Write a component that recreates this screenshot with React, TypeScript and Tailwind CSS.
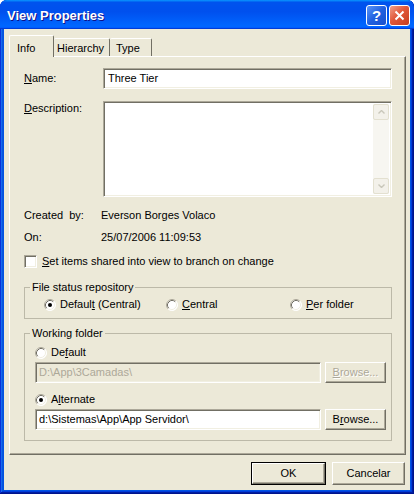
import React from "react";

const sunken =
  "border border-t-[#aca899] border-l-[#aca899] border-b-white border-r-white shadow-[inset_1px_1px_0_#716f64,inset_-1px_-1px_0_#f1efe2]";

function Radio({ checked }: { checked?: boolean }) {
  return (
    <svg width="12" height="12" viewBox="0 0 12 12" className="shrink-0">
      <circle cx="6" cy="6" r="5.5" fill="#fff" />
      <path d="M2.11 9.89 A5.5 5.5 0 0 1 9.89 2.11" stroke="#aca899" fill="none" />
      <path d="M9.89 2.11 A5.5 5.5 0 0 1 2.11 9.89" stroke="#fff" fill="none" />
      <path d="M2.82 9.18 A4.5 4.5 0 0 1 9.18 2.82" stroke="#716f64" fill="none" />
      <path d="M9.18 2.82 A4.5 4.5 0 0 1 2.82 9.18" stroke="#f1efe2" fill="none" />
      {checked && <circle cx="6" cy="6" r="2" fill="#000" />}
    </svg>
  );
}

function Button({
  children,
  def,
  disabled,
  className,
}: {
  children: React.ReactNode;
  def?: boolean;
  disabled?: boolean;
  className?: string;
}) {
  const face = (
    <div className="flex h-full w-full items-center justify-center border border-t-white border-l-white border-b-[#716f64] border-r-[#716f64] bg-[#ece9d8] shadow-[inset_-1px_-1px_0_#aca899]">
      <span
        className={
          disabled ? "text-[#aca899] [text-shadow:1px_1px_0_#fff]" : "text-black"
        }
      >
        {children}
      </span>
    </div>
  );
  if (def) {
    return <div className={`border border-black ${className ?? ""}`}>{face}</div>;
  }
  return <div className={className}>{face}</div>;
}

export default function App() {
  return (
    <div className="h-[494px] w-[418px] bg-white font-['Liberation_Sans',Arial,sans-serif] text-[11px] leading-[13px] text-black">
      <div className="flex h-[494px] w-[414px] flex-col rounded-t-[7px] bg-[#0054e3] shadow-[inset_-1px_-1px_#00138c,inset_1px_1px_#0831d9,inset_-2px_-2px_#001ea0,inset_2px_2px_#166aee,inset_-3px_-3px_#003bda,inset_3px_3px_#0855dd]">
        {/* title bar */}
        <div className="flex h-[29px] shrink-0 items-start rounded-t-[7px] bg-[linear-gradient(180deg,#0997ff,#0053ee_8%,#0050ee_40%,#06f_88%,#06f_93%,#005bff_95%,#003dd7_96%,#003dd7)] pl-[7px] pr-[4px]">
          <span className="mt-[8px] text-[13px] font-bold leading-[15px] text-white [text-shadow:1px_1px_0_#0f1089]">
            View Properties
          </span>
          <div className="ml-auto mt-[5px] flex gap-[2px]">
            <div className="flex h-[21px] w-[21px] items-center justify-center rounded-[3px] border border-white bg-[linear-gradient(135deg,#5a95f8,#2160e0_50%,#1a4fcc)]">
              <span className="text-[15px] font-bold leading-none text-white">?</span>
            </div>
            <div className="flex h-[21px] w-[21px] items-center justify-center rounded-[3px] border border-white bg-[linear-gradient(135deg,#f0a08a,#e1583a_45%,#c73d1e)]">
              <svg width="11" height="11" viewBox="0 0 11 11">
                <path d="M1.5 1.5 L9.5 9.5 M9.5 1.5 L1.5 9.5" stroke="#fff" strokeWidth="2" />
              </svg>
            </div>
          </div>
        </div>

        {/* body */}
        <div className="mx-[4px] flex h-[461px] flex-col bg-[#ece9d8] pl-[5px] pr-[4px]">
          {/* tabs */}
          <div className="mt-[6px] flex h-[21px] items-end">
            <div className="relative z-10 mb-[-1px] flex h-[22px] w-[45px] items-start rounded-t-[2px] border-l border-t border-r border-l-white border-t-white border-r-[#716f64] bg-[#ece9d8] pl-[7px] pt-[6px]">
              Info
            </div>
            <div className="flex h-[18px] w-[56px] items-start rounded-t-[2px] border-t border-r border-t-white border-r-[#716f64] pl-[3px] pt-[3px]">
              Hierarchy
            </div>
            <div className="flex h-[18px] w-[42px] items-start rounded-t-[2px] border-t border-r border-t-white border-r-[#716f64] pl-[6px] pt-[3px]">
              Type
            </div>
          </div>

          {/* panel */}
          <div className="flex h-[399px] w-[397px] flex-col border border-t-white border-l-white border-b-[#716f64] border-r-[#716f64] pl-[14px] shadow-[inset_-1px_-1px_0_#aca899]">
            <div className="mt-[11px] flex h-[21px] items-center">
              <span className="w-[79px]">
                <u>N</u>ame:
              </span>
              <div className={`flex h-[21px] w-[289px] items-center bg-white pl-[4px] ${sunken}`}>
                Three Tier
              </div>
            </div>

            <div className="mt-[12px] flex h-[96px]">
              <span className="w-[79px] pt-[1px]">
                <u>D</u>escription:
              </span>
              <div className={`flex h-[96px] w-[289px] justify-end bg-white p-[2px] ${sunken}`}>
                <div className="flex w-[16px] flex-col justify-between bg-[#f7f6f1]">
                  <div className="flex h-[16px] items-center justify-center rounded-[2px] border border-[#e3e0d0] bg-[#f3f1ea]">
                    <svg width="7" height="4" viewBox="0 0 7 4">
                      <path d="M0.5 3.5 L3.5 0.5 L6.5 3.5" stroke="#c9c7ba" fill="none" strokeWidth="1.4" />
                    </svg>
                  </div>
                  <div className="flex h-[16px] items-center justify-center rounded-[2px] border border-[#e3e0d0] bg-[#f3f1ea]">
                    <svg width="7" height="4" viewBox="0 0 7 4">
                      <path d="M0.5 0.5 L3.5 3.5 L6.5 0.5" stroke="#c9c7ba" fill="none" strokeWidth="1.4" />
                    </svg>
                  </div>
                </div>
              </div>
            </div>

            <div className="mt-[11px] flex leading-[14px]">
              <span className="w-[77px] whitespace-pre">Created  by:</span>
              <span>Everson Borges Volaco</span>
            </div>
            <div className="mt-[8px] flex leading-[14px]">
              <span className="w-[77px]">On:</span>
              <span>25/07/2006 11:09:53</span>
            </div>

            <div className="mt-[11px] flex h-[13px] items-center">
              <div className={`h-[13px] w-[13px] bg-white ${sunken}`} />
              <span className="ml-[5px]">
                <u>S</u>et items shared into view to branch on change
              </span>
            </div>

            <fieldset className="mt-[13px] h-[38px] w-[368px] border border-[#bcb9a8] px-[5px]">
              <legend className="px-[2px] leading-[13px]">File status repository</legend>
              <div className="mt-[4px] flex h-[13px] items-center pl-[14px]">
                <div className="flex w-[122px] items-center gap-[4px]">
                  <Radio checked />
                  <span>
                    Defaul<u>t</u> (Central)
                  </span>
                </div>
                <div className="flex w-[124px] items-center gap-[4px]">
                  <Radio />
                  <span>
                    <u>C</u>entral
                  </span>
                </div>
                <div className="flex items-center gap-[4px]">
                  <Radio />
                  <span>
                    <u>P</u>er folder
                  </span>
                </div>
              </div>
            </fieldset>

            <fieldset className="mt-[8px] h-[114px] w-[368px] border border-[#bcb9a8] px-[5px]">
              <legend className="px-[2px] leading-[13px]">Working folder</legend>
              <div className="mt-[6px] flex h-[13px] items-center gap-[4px] pl-[5px]">
                <Radio />
                <span>
                  De<u>f</u>ault
                </span>
              </div>
              <div className="mt-[3px] flex h-[21px] gap-[4px] pl-[5px]">
                <div className={`flex h-[21px] w-[286px] items-center bg-[#ece9d8] pl-[3px] text-[#aca899] ${sunken}`}>
                  D:\App\3Camadas\
                </div>
                <Button disabled className="h-[21px] w-[61px]">
                  <u>B</u>rowse...
                </Button>
              </div>
              <div className="mt-[10px] flex h-[13px] items-center gap-[4px] pl-[5px]">
                <Radio checked />
                <span>
                  A<u>l</u>ternate
                </span>
              </div>
              <div className="mt-[3px] flex h-[21px] gap-[4px] pl-[5px]">
                <div className={`flex h-[21px] w-[286px] items-center bg-white pl-[3px] ${sunken}`}>
                  d:\Sistemas\App\App Servidor\
                </div>
                <Button className="h-[21px] w-[61px]">
                  B<u>r</u>owse...
                </Button>
              </div>
            </fieldset>
          </div>

          {/* dialog buttons */}
          <div className="mt-[7px] flex justify-end gap-[6px] pr-[1px]">
            <Button def className="h-[23px] w-[75px]">
              OK
            </Button>
            <Button className="h-[23px] w-[73px]">Cancelar</Button>
          </div>
        </div>
      </div>
    </div>
  );
}
